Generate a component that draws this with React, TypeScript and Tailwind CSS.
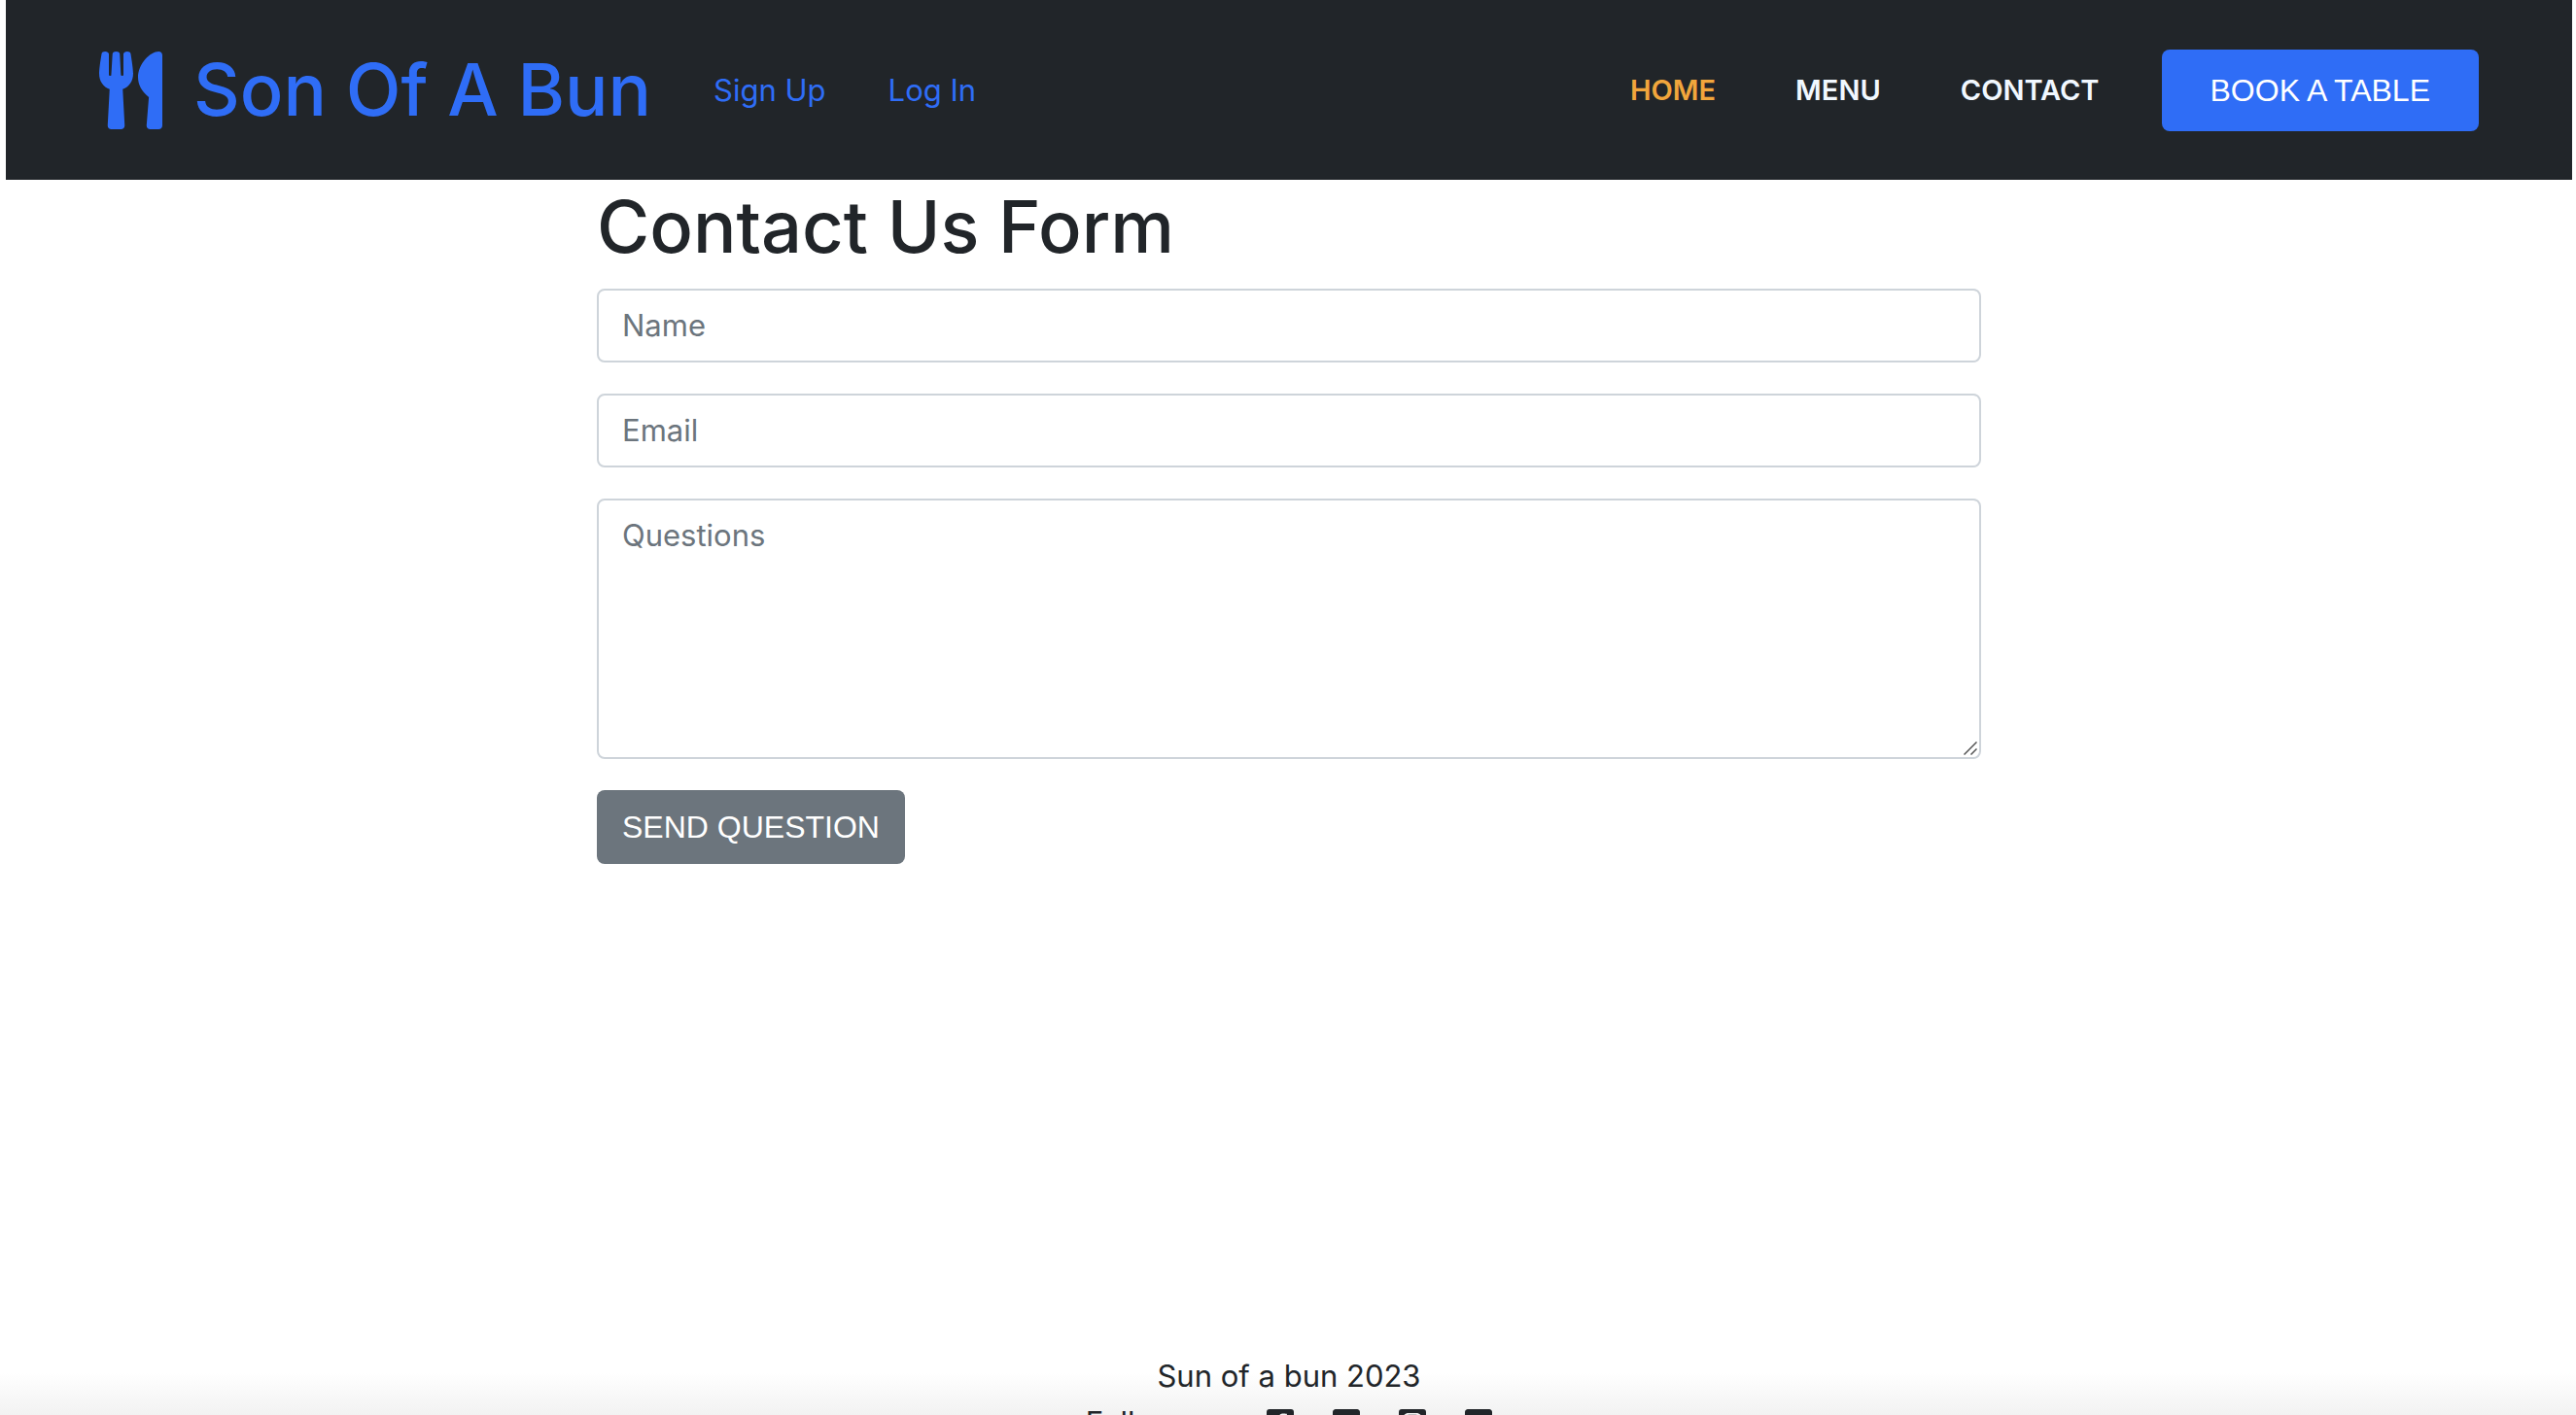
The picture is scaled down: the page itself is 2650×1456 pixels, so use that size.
import React from 'react';
import {
  FaFacebookSquare,
  FaInstagramSquare,
  FaTwitterSquare,
  FaUtensils,
  FaYoutubeSquare,
} from 'react-icons/fa';

const pages = [
  { label: 'HOME', href: '#home', color: 'text-[#f1a63c]' },
  { label: 'MENU', href: '#menu', color: 'text-[#f1f8ff]' },
  { label: 'CONTACT', href: '#contact', color: 'text-[#f1f8ff]' },
];

const socials = [
  { label: 'Facebook', Icon: FaFacebookSquare },
  { label: 'Twitter', Icon: FaTwitterSquare },
  { label: 'Instagram', Icon: FaInstagramSquare },
  { label: 'YouTube', Icon: FaYoutubeSquare },
];

const field =
  'block w-full rounded-lg border-2 border-[#ced4da] bg-white px-6 py-3 text-[31px] leading-[48px] text-[#212529] placeholder:text-[#6c757d] placeholder:opacity-100';

function Navbar() {
  return (
    <nav className="flex items-center bg-[#212529] px-24 py-11 text-[#2f6df6]">
      <a href="#home" className="flex items-center gap-8">
        <FaUtensils className="h-20 w-[65px]" />
        <span className="text-[74px] leading-[97px] font-medium">Son Of A Bun</span>
      </a>
      <div className="ml-16 flex gap-16 text-[31px] leading-[48px]">
        <a href="#signup">Sign Up</a>
        <a href="#login">Log In</a>
      </div>
      <div className="ml-auto flex items-center">
        <div className="flex gap-[82px] pr-16 text-[29px] leading-[48px] font-semibold">
          {pages.map((page) => (
            <a key={page.label} href={page.href} className={page.color}>
              {page.label}
            </a>
          ))}
        </div>
        <a
          href="#book"
          className="rounded-lg bg-[#2f6df6] px-[50px] py-[18px] font-['Liberation_Sans',Arial,sans-serif] text-[32px] leading-[48px] text-white"
        >
          BOOK A TABLE
        </a>
      </div>
    </nav>
  );
}

function ContactForm() {
  return (
    <main className="mx-auto w-[1424px] max-w-full">
      <h1 className="mb-4 text-[74px] leading-[96px] font-medium">Contact Us Form</h1>
      <form className="flex flex-col items-start gap-8" onSubmit={(e) => e.preventDefault()}>
        <input className={field} type="text" name="name" placeholder="Name" aria-label="Name" />
        <input className={field} type="email" name="email" placeholder="Email" aria-label="Email" />
        <div className="relative w-full">
          <textarea
            className={`${field} h-[268px] resize-none`}
            name="questions"
            placeholder="Questions"
            aria-label="Questions"
          />
          <svg
            className="pointer-events-none absolute right-1 bottom-1 size-3.5"
            viewBox="0 0 14 14"
            fill="none"
            stroke="#555"
            strokeWidth="1.5"
            aria-hidden="true"
          >
            <path d="M0.5 13.5 13.5 0.5M7.5 13.5 13.5 7.5" />
          </svg>
        </div>
        <button
          type="submit"
          className="rounded-lg bg-[#6c757d] px-[26px] py-[14px] font-['Liberation_Sans',Arial,sans-serif] text-[32px] leading-[48px] text-white"
        >
          SEND QUESTION
        </button>
      </form>
    </main>
  );
}

function Footer() {
  return (
    <footer className="mt-auto flex h-[84px] flex-col items-center overflow-hidden pt-5 text-[31px] leading-[48px]">
      <p>Sun of a bun 2023</p>
      <div className="flex items-center gap-10">
        <span>Follow us:</span>
        {socials.map(({ label, Icon }) => (
          <a key={label} href={`#${label.toLowerCase()}`} aria-label={label}>
            <Icon className="h-8 w-7" />
          </a>
        ))}
      </div>
    </footer>
  );
}

export default function App() {
  return (
    <div className="flex h-screen flex-col overflow-hidden bg-linear-to-b from-white from-97% to-[#f2f2f2] pr-1 pl-1.5 font-['Inter','Liberation_Sans',sans-serif] text-[#212529]">
      <Navbar />
      <ContactForm />
      <Footer />
    </div>
  );
}
